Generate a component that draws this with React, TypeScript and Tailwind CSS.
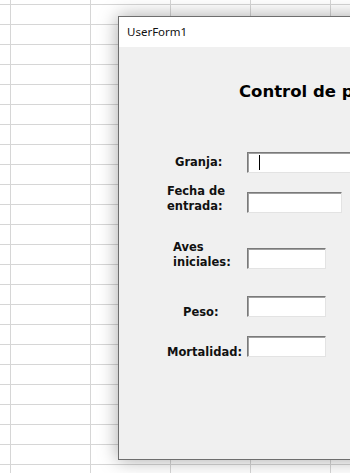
import React from 'react';

type Field = {
  lines: string[];
  labelLeft: string;
  labelTop: string;
  boxTop: string;
  boxWidth: string;
  rowClass: string;
  cursor?: boolean;
};

const fields: Field[] = [
  { lines: ['Granja:'], labelLeft: 'pl-[56px]', labelTop: 'mt-[3px]', boxTop: 'mt-0', boxWidth: 'w-[140px]', rowClass: 'mt-[49px] h-[20px]', cursor: true },
  { lines: ['Fecha de', 'entrada:'], labelLeft: 'pl-[48px]', labelTop: 'mt-0', boxTop: 'mt-[8px]', boxWidth: 'w-[95px]', rowClass: 'mt-[12px] h-[30px]' },
  { lines: ['Aves', 'iniciales:'], labelLeft: 'pl-[54px]', labelTop: 'mt-0', boxTop: 'mt-[8px]', boxWidth: 'w-[79px]', rowClass: 'mt-[26px] h-[31px]' },
  { lines: ['Peso:'], labelLeft: 'pl-[64px]', labelTop: 'mt-[9px]', boxTop: 'mt-0', boxWidth: 'w-[79px]', rowClass: 'mt-[25px] h-[24px]' },
  { lines: ['Mortalidad:'], labelLeft: 'pl-[48px]', labelTop: 'mt-[9px]', boxTop: 'mt-0', boxWidth: 'w-[79px]', rowClass: 'mt-[16px] h-[24px]' },
];

function TextBox({ width, top, cursor }: { width: string; top: string; cursor?: boolean }) {
  return (
    <div
      className={`${width} ${top} h-[21px] shrink-0 bg-white border border-t-[#7a7a7a] border-l-[#7a7a7a] border-b-[#e3e3e3] border-r-[#e3e3e3] shadow-[inset_1px_1px_0_#a0a0a0] pl-[11px] pt-[2px]`}
    >
      {cursor && <div className="w-px h-[15px] bg-black" />}
    </div>
  );
}

export default function App() {
  return (
    <div className="w-[350px] h-[473px] overflow-hidden bg-white bg-[linear-gradient(to_right,#d6d6d6_1px,transparent_1px),linear-gradient(to_bottom,#d6d6d6_1px,transparent_1px)] [background-size:80px_20px] [background-position:10px_4px] pl-[118px] pt-[16px]">
      <div className="w-[300px] h-[444px] flex flex-col border border-[#6e6e6e] shadow-[0_0_18px_rgba(0,0,0,0.35)] font-['DejaVu_Sans',sans-serif]">
        {/* title bar */}
        <div className="h-[30px] shrink-0 bg-white flex items-center pl-[8px] text-[11.5px] text-[#111] font-['Noto_Sans',sans-serif]">
          UserForm1
        </div>

        {/* form body */}
        <div className="flex-1 bg-[#f0f0f0] flex flex-col">
          <div className="mt-[34px] h-[22px] pl-[120px] text-[16.5px] leading-[22px] font-bold text-black whitespace-nowrap">
            Control de pollos
          </div>

          {fields.map((f) => (
            <div key={f.lines.join(' ')} className={`flex items-start ${f.rowClass}`}>
              <div className={`w-[128px] shrink-0 ${f.labelLeft} ${f.labelTop} text-[11.5px] leading-[15px] font-bold text-[#111]`}>
                {f.lines.map((l) => (
                  <div key={l}>{l}</div>
                ))}
              </div>
              <TextBox width={f.boxWidth} top={f.boxTop} cursor={f.cursor} />
            </div>
          ))}
        </div>
      </div>
    </div>
  );
}
